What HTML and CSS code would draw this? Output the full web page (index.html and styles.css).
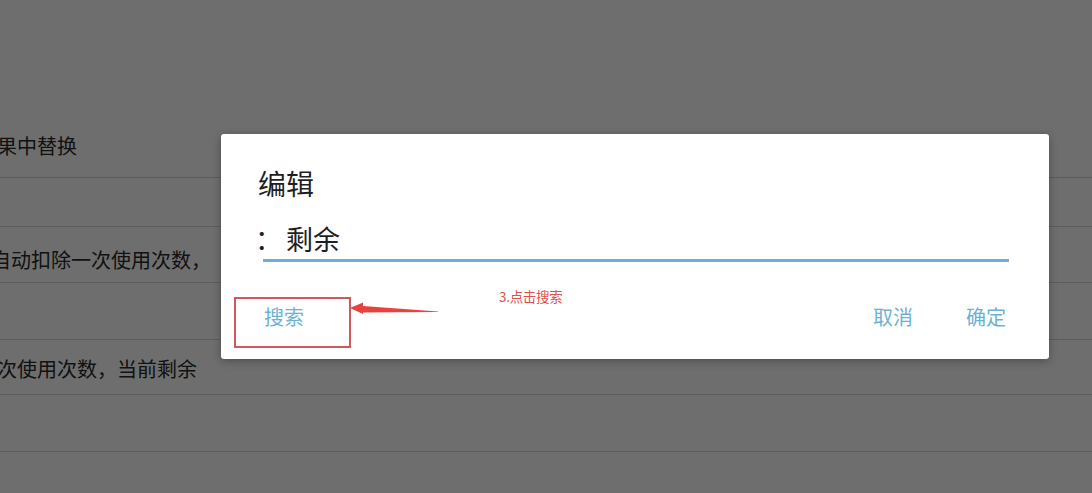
FILE: index.html
```html
<!DOCTYPE html>
<html lang="zh-CN">
<head>
  <meta charset="UTF-8">
  <meta name="viewport" content="width=device-width, initial-scale=1.0">
  <title>编辑</title>
  <link rel="stylesheet" href="styles.css">
</head>
<body>
  <!-- Page behind the dialog -->
  <div class="list">
    <div class="row row-1"><span class="text t1">果中替换</span></div>
    <div class="row row-2"></div>
    <div class="row row-3"><span class="text t3">自动扣除一次使用次数，</span></div>
    <div class="row row-4"></div>
    <div class="row row-5"><span class="text t5">次使用次数，当前剩余</span></div>
    <div class="row row-6"></div>
    <div class="row row-7"></div>
  </div>

  <!-- Dim overlay -->
  <div class="mask"></div>

  <!-- Dialog -->
  <div class="dialog">
    <div class="dialog-title">编辑</div>
    <div class="dialog-input">
      <span class="input-text"><span class="colon">：</span>剩余</span>
    </div>
    <div class="dialog-actions">
      <span class="btn btn-search">搜索</span>
      <span class="spacer"></span>
      <span class="btn">取消</span>
      <span class="btn">确定</span>
    </div>
  </div>

  <!-- Annotation -->
  <div class="note-box"></div>
  <svg class="note-arrow" width="96" height="20" viewBox="0 0 96 20">
    <path d="M2 9 L15 3.5 L15 7 L90 12.5 L90 13 L15 13.5 L15 15 Z" fill="#e8423f"/>
  </svg>
  <div class="note-label">3.点击搜索</div>
</body>
</html>
```

FILE: styles.css
```css
* { margin: 0; padding: 0; box-sizing: border-box; }
html, body { width: 100%; height: 100%; overflow: hidden; }
body {
  background: #fff;
  font-family: "Noto Sans CJK SC", "Noto Sans", sans-serif;
  color: #222;
  position: relative;
}

/* ---------- список под диалогом ---------- */
.list { padding-top: 114px; }
.row {
  display: flex; align-items: center;
  border-bottom: 1px solid #d6d6d6;
  font-size: 20px; color: #2a2a2a;
  white-space: nowrap; overflow: hidden;
}
.row-1 { height: 64px; }
.row-2 { height: 49px; }
.row-3 { height: 56px; padding-top: 10px; }
.row-4 { height: 57px; }
.row-5 { height: 55px; padding-top: 3px; }
.row-6 { height: 57px; }
.row-7 { height: 60px; }
.t1 { margin-left: -3px; }
.t3 { margin-left: -9px; }
.t5 { margin-left: -3px; }

.mask {
  position: absolute; top: 0; left: 0; width: 100%; height: 100%;
  background: rgba(0,0,0,0.57);
}

/* ---------- диалог ---------- */
.dialog {
  position: absolute; top: 134px; left: 221px;
  width: 828px; height: 225px;
  background: #fff; border-radius: 3px;
  box-shadow: 0 2px 8px rgba(0,0,0,0.3);
  padding: 30px 40px 23px 37px;
  display: flex; flex-direction: column;
}
.dialog-title { font-size: 28px; line-height: 38px; color: #1f1f1f; }
.dialog-input {
  margin-top: 16px; margin-left: 5px;
  height: 44px;
  border-bottom: 3px solid #74acd0;
  display: flex; align-items: center;
}
.input-text { font-size: 27px; line-height: 34px; color: #1f1f1f; margin-left: -8px; }
.colon { margin-right: 4px; }
.dialog-actions {
  margin-top: auto;
  display: flex; align-items: center;
  height: 40px;
}
.btn { font-size: 20px; color: #6cb1d6; }
.btn-search { margin-left: 6px; }
.btn:last-child { margin-right: 3px; }
.spacer { flex: 1; }
.btn + .btn { margin-left: 53px; }

/* ---------- пометка ---------- */
.note-box {
  position: absolute; top: 297px; left: 234px;
  width: 117px; height: 51px;
  border: 2px solid #d0585c;
}
.note-arrow { position: absolute; top: 299px; left: 348px; }
.note-label {
  position: absolute; top: 287px; left: 499px;
  font-size: 13.5px; line-height: 18px; color: #e14f4f;
  letter-spacing: -0.3px;
}
```
